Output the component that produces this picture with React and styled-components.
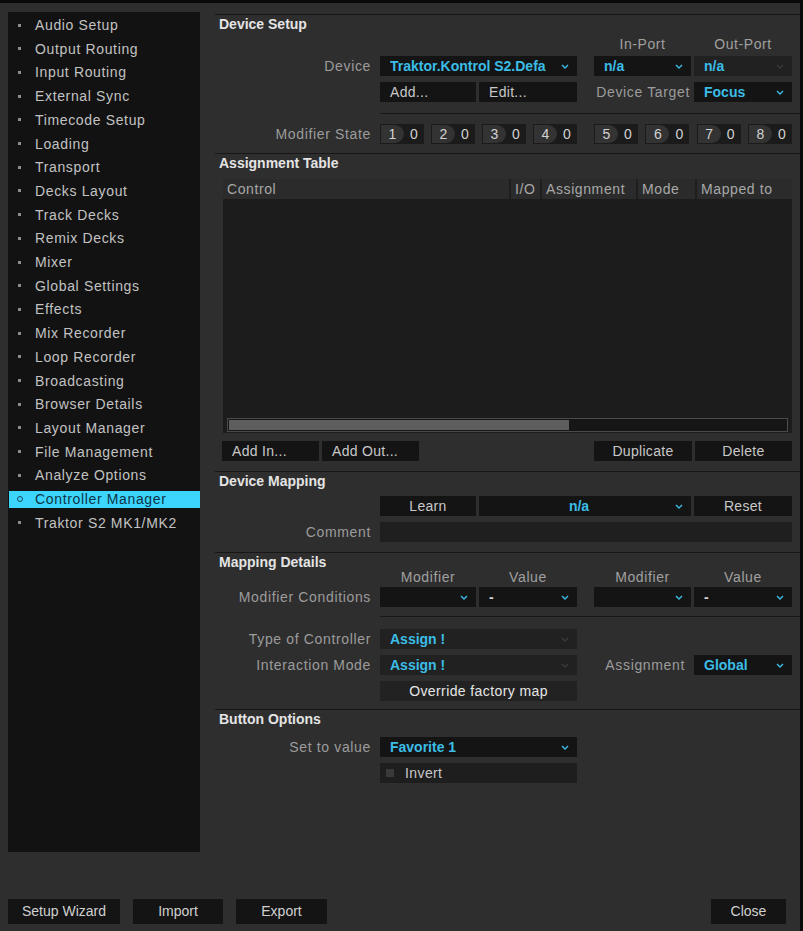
import React from "react";
import styled, { createGlobalStyle } from "styled-components";

const GlobalStyle = createGlobalStyle`
  html, body {
    margin: 0;
    padding: 0;
    background: #2e2e2e;
  }
  * {
    box-sizing: border-box;
  }
`;

const CYAN = "#3bbde6";
const RULE = "#171717";

const navItems = [
  "Audio Setup",
  "Output Routing",
  "Input Routing",
  "External Sync",
  "Timecode Setup",
  "Loading",
  "Transport",
  "Decks Layout",
  "Track Decks",
  "Remix Decks",
  "Mixer",
  "Global Settings",
  "Effects",
  "Mix Recorder",
  "Loop Recorder",
  "Broadcasting",
  "Browser Details",
  "Layout Manager",
  "File Management",
  "Analyze Options",
  "Controller Manager",
  "Traktor S2 MK1/MK2",
];

// Chevron used on every dropdown
const Chevron = ({ dim }) => (
  <svg width="8" height="5" viewBox="0 0 8 5">
    <polyline
      points="1,1 4,4 7,1"
      fill="none"
      stroke={dim ? "#3a3a3a" : CYAN}
      strokeWidth="1.4"
    />
  </svg>
);

export default function App() {
  return (
    <Window>
      <GlobalStyle />
      <Body>
        <Sidebar>
          <NavList>
            {navItems.map((item) => (
              <NavItem key={item} $active={item === "Controller Manager"}>
                <Bullet $active={item === "Controller Manager"} />
                {item}
              </NavItem>
            ))}
          </NavList>
        </Sidebar>

        <Content>
          {/* Device Setup */}
          <Section>
            <Header>Device Setup</Header>
            <Headings $mt={4}>
              <ColHead $col="5">In-Port</ColHead>
              <ColHead $col="6">Out-Port</ColHead>
            </Headings>
            <Row $mt={4}>
              <Label>Device</Label>
              <Dropdown $col="2 / 4">
                <DropText>Traktor.Kontrol S2.Defa</DropText>
                <Chevron />
              </Dropdown>
              <Dropdown $col="5">
                <DropText>n/a</DropText>
                <Chevron />
              </Dropdown>
              <Dropdown $col="6" $dim>
                <DropText>n/a</DropText>
                <Chevron dim />
              </Dropdown>
            </Row>
            <Row>
              <Button $col="2" $left>
                Add...
              </Button>
              <Button $col="3" $left>
                Edit...
              </Button>
              <Label $col="4 / 6" $pr={1}>
                Device Target
              </Label>
              <Dropdown $col="6">
                <DropText>Focus</DropText>
                <Chevron />
              </Dropdown>
            </Row>
            <SubRule $mt={11} />
            <Row $mt={10}>
              <Label>Modifier State</Label>
              <ModGroup $col="2 / 4">
                {[1, 2, 3, 4].map((n) => (
                  <ModBox key={n}>
                    <ModNum>{n}</ModNum>
                    <ModVal>0</ModVal>
                  </ModBox>
                ))}
              </ModGroup>
              <ModGroup $col="5 / 7">
                {[5, 6, 7, 8].map((n) => (
                  <ModBox key={n}>
                    <ModNum>{n}</ModNum>
                    <ModVal>0</ModVal>
                  </ModBox>
                ))}
              </ModGroup>
            </Row>
          </Section>

          {/* Assignment Table */}
          <Section $pb={10}>
            <Header>Assignment Table</Header>
            <Table>
              <TableHead>
                <Th $w={288}>Control</Th>
                <Th $w={31}>I/O</Th>
                <Th $w={96}>Assignment</Th>
                <Th $w={59}>Mode</Th>
                <Th $w={95} $last>
                  Mapped to
                </Th>
              </TableHead>
              <TableBody>
                <ScrollTrack>
                  <ScrollThumb style={{ width: "61%" }} />
                </ScrollTrack>
              </TableBody>
            </Table>
            <ButtonBar>
              <Button $w={97} $left>
                Add In...
              </Button>
              <Button $w={97} $left>
                Add Out...
              </Button>
              <Spacer />
              <Button $w={98}>Duplicate</Button>
              <Button $w={97}>Delete</Button>
            </ButtonBar>
          </Section>

          {/* Device Mapping */}
          <Section $pb={10}>
            <Header>Device Mapping</Header>
            <Row $mt={7}>
              <Button $col="2">Learn</Button>
              <Dropdown $col="3 / 6" $center>
                <DropText>n/a</DropText>
                <Chevron />
              </Dropdown>
              <Button $col="6">Reset</Button>
            </Row>
            <Row>
              <Label>Comment</Label>
              <Field $col="2 / 7" />
            </Row>
          </Section>

          {/* Mapping Details */}
          <Section $pb={8}>
            <Header>Mapping Details</Header>
            <Headings $h={12} $mt={-1}>
              <ColHead $col="2">Modifier</ColHead>
              <ColHead $col="3">Value</ColHead>
              <ColHead $col="5">Modifier</ColHead>
              <ColHead $col="6">Value</ColHead>
            </Headings>
            <Row $mt={6}>
              <Label>Modifier Conditions</Label>
              <Dropdown $col="2">
                <DropText />
                <Chevron />
              </Dropdown>
              <Dropdown $col="3" $plain>
                <DropText>-</DropText>
                <Chevron />
              </Dropdown>
              <Dropdown $col="5">
                <DropText />
                <Chevron />
              </Dropdown>
              <Dropdown $col="6" $plain>
                <DropText>-</DropText>
                <Chevron />
              </Dropdown>
            </Row>
            <SubRule $mt={9} />
            <Row $mt={12}>
              <Label>Type of Controller</Label>
              <Dropdown $col="2 / 4" $dim>
                <DropText>Assign !</DropText>
                <Chevron dim />
              </Dropdown>
            </Row>
            <Row>
              <Label>Interaction Mode</Label>
              <Dropdown $col="2 / 4" $dim>
                <DropText>Assign !</DropText>
                <Chevron dim />
              </Dropdown>
              <Label $col="4 / 6" $pr={6}>
                Assignment
              </Label>
              <Dropdown $col="6">
                <DropText>Global</DropText>
                <Chevron />
              </Dropdown>
            </Row>
            <Row>
              <Button $col="2 / 4" $soft>
                Override factory map
              </Button>
            </Row>
          </Section>

          {/* Button Options */}
          <Section $pb={0}>
            <Header>Button Options</Header>
            <Row $mt={10}>
              <Label>Set to value</Label>
              <Dropdown $col="2 / 4">
                <DropText>Favorite 1</DropText>
                <Chevron />
              </Dropdown>
            </Row>
            <Row>
              <CheckField $col="2 / 4">
                <CheckBox />
                Invert
              </CheckField>
            </Row>
          </Section>
        </Content>
      </Body>

      <Footer>
        <FooterButton $w={112}>Setup Wizard</FooterButton>
        <FooterButton $w={90}>Import</FooterButton>
        <FooterButton $w={91}>Export</FooterButton>
        <FooterButton $w={75} $push>
          Close
        </FooterButton>
      </Footer>
    </Window>
  );
}

const Window = styled.div`
  width: 803px;
  height: 931px;
  display: flex;
  flex-direction: column;
  background: #2e2e2e;
  border-top: 3px solid #0a0a0a;
  border-right: 3px solid #0a0a0a;
  font-family: "Liberation Sans", Arial, sans-serif;
  font-size: 14px;
  overflow: hidden;
`;

const Body = styled.div`
  flex: 1;
  display: flex;
  align-items: flex-start;
  padding: 9px 0 0 8px;
`;

const Sidebar = styled.nav`
  width: 192px;
  height: 840px;
  flex-shrink: 0;
  background: #121212;
`;

const NavList = styled.ul`
  list-style: none;
  margin: 0;
  padding: 4.5px 0 0;
  display: flex;
  flex-direction: column;
  gap: 6.71px;
`;

const NavItem = styled.li`
  height: 17px;
  margin-left: 1px;
  display: flex;
  align-items: center;
  font-size: 14px;
  letter-spacing: 0.65px;
  white-space: nowrap;
  color: ${(p) => (p.$active ? "#0d3446" : "#c2c2c2")};
  background: ${(p) => (p.$active ? "#3cd5fd" : "transparent")};
`;

const Bullet = styled.span`
  flex-shrink: 0;
  width: ${(p) => (p.$active ? 6 : 3)}px;
  height: ${(p) => (p.$active ? 6 : 3)}px;
  margin: ${(p) => (p.$active ? "0 12px 0 8px" : "0 14px 0 9px")};
  border-radius: ${(p) => (p.$active ? "50%" : "0")};
  background: ${(p) => (p.$active ? "transparent" : "#8c8c8c")};
  border: ${(p) => (p.$active ? "1.5px solid #1a4a5c" : "none")};
`;

const Content = styled.main`
  flex: 1;
  margin: 2px 0 0 15px;
  display: flex;
  flex-direction: column;
`;

const Section = styled.section`
  border-top: 1px solid ${RULE};
  padding-bottom: ${(p) => p.$pb ?? 9}px;
  display: flex;
  flex-direction: column;
`;

const Header = styled.h2`
  margin: 0;
  padding: 2px 0 0 4px;
  font-size: 14px;
  line-height: 15px;
  font-weight: bold;
  color: #e4e4e4;
`;

const Row = styled.div`
  display: grid;
  grid-template-columns: 162px 96px 98px 11px 97px 98px;
  column-gap: 3px;
  height: 20px;
  margin-top: ${(p) => p.$mt ?? 6}px;
`;

const Headings = styled(Row)`
  height: ${(p) => p.$h ?? 16}px;
`;

const ColHead = styled.div`
  grid-column: ${(p) => p.$col};
  grid-row: 1;
  text-align: center;
  color: #a0a0a0;
  letter-spacing: 0.6px;
  align-self: center;
`;

const Label = styled.div`
  grid-column: ${(p) => p.$col ?? "1"};
  grid-row: 1;
  text-align: right;
  padding-right: ${(p) => p.$pr ?? 6}px;
  line-height: 20px;
  color: #9c9c9c;
  letter-spacing: 0.65px;
  white-space: nowrap;
`;

const Dropdown = styled.div`
  grid-column: ${(p) => p.$col};
  grid-row: 1;
  display: flex;
  align-items: center;
  gap: 6px;
  padding: 0 8px 0 10px;
  background: ${(p) => (p.$dim ? "#212121" : "#141414")};
  color: ${(p) => (p.$plain ? "#d6d6d6" : CYAN)};
  font-size: 14px;
  font-weight: bold;
  text-align: ${(p) => (p.$center ? "center" : "left")};
  overflow: hidden;
`;

const DropText = styled.span`
  flex: 1;
  overflow: hidden;
  white-space: nowrap;
`;

const Button = styled.div`
  grid-column: ${(p) => p.$col ?? "auto"};
  grid-row: 1;
  width: ${(p) => (p.$w ? `${p.$w}px` : "auto")};
  height: 20px;
  line-height: 20px;
  padding: ${(p) => (p.$left ? "0 0 0 10px" : "0")};
  text-align: ${(p) => (p.$left ? "left" : "center")};
  background: ${(p) => (p.$soft ? "#222222" : "#141414")};
  color: ${(p) => (p.$soft ? "#e6e6e6" : "#c8c8c8")};
  letter-spacing: ${(p) => (p.$soft ? "0.4px" : "0.3px")};
  white-space: nowrap;
`;

const Field = styled.div`
  grid-column: ${(p) => p.$col};
  grid-row: 1;
  background: #1f1f1f;
`;

const CheckField = styled.div`
  grid-column: ${(p) => p.$col};
  grid-row: 1;
  display: flex;
  align-items: center;
  gap: 11px;
  padding-left: 6px;
  background: #1e1e1e;
  color: #c8c8c8;
  letter-spacing: 0.4px;
`;

const CheckBox = styled.span`
  width: 8px;
  height: 8px;
  background: #3a3a3a;
`;

const SubRule = styled.hr`
  flex-shrink: 0;
  height: 0;
  margin: ${(p) => p.$mt}px 0 0 165px;
  border: none;
  border-top: 1px solid ${RULE};
`;

const ModGroup = styled.div`
  grid-column: ${(p) => p.$col};
  grid-row: 1;
  display: flex;
  justify-content: space-between;
`;

const ModBox = styled.div`
  width: 44px;
  display: flex;
  padding: 1px 0 1px 1px;
  background: #1b1b1b;
  color: #d2d2d2;
  line-height: 18px;
`;

const ModNum = styled.span`
  width: 23px;
  text-align: center;
  background: #333333;
  border-radius: 0 9px 9px 0;
`;

const ModVal = styled.span`
  flex: 1;
  text-align: center;
`;

const Table = styled.div`
  margin: 8px 8px 0;
  display: flex;
  flex-direction: column;
`;

const TableHead = styled.div`
  display: flex;
  height: 20px;
  background: #2b2b2b;
`;

const Th = styled.div`
  width: ${(p) => p.$w}px;
  padding-left: 4px;
  line-height: 20px;
  color: #a8a8a8;
  letter-spacing: 0.6px;
  white-space: nowrap;
  overflow: hidden;
  border-right: ${(p) => (p.$last ? "none" : "2px solid #1e1e1e")};
`;

const TableBody = styled.div`
  height: 234px;
  background: #1c1c1c;
  display: flex;
  flex-direction: column;
  justify-content: flex-end;
  padding: 0 4px 1px;
`;

const ScrollTrack = styled.div`
  height: 14px;
  padding: 1px;
  border: 1px solid #4a4a4a;
  background: #161616;
  display: flex;
`;

const ScrollThumb = styled.div`
  background: #5e5e5e;
`;

const ButtonBar = styled.div`
  display: flex;
  gap: 3px;
  margin: 8px 8px 0 7px;
`;

const Spacer = styled.div`
  flex: 1;
  margin-right: 14px;
`;

const Footer = styled.footer`
  display: flex;
  align-items: flex-end;
  gap: 13px;
  padding: 0 14px 7px 8px;
`;

const FooterButton = styled.div`
  width: ${(p) => p.$w}px;
  height: 25px;
  line-height: 25px;
  margin-left: ${(p) => (p.$push ? "auto" : "0")};
  text-align: center;
  background: #141414;
  color: #d0d0d0;
  font-size: 14px;
`;
